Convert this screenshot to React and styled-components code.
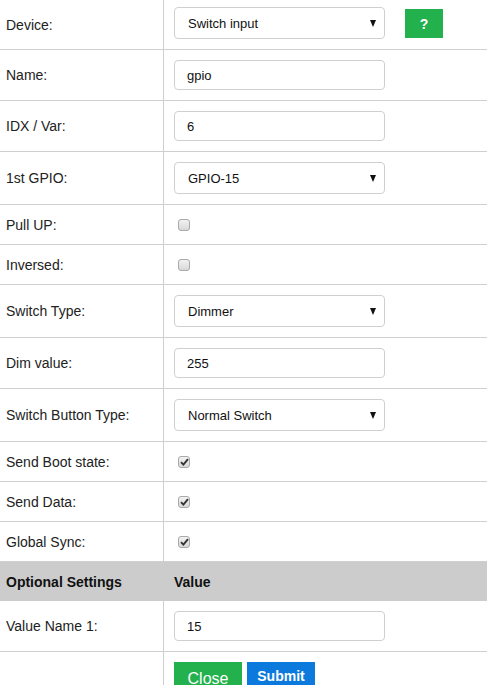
import styled, { createGlobalStyle } from "styled-components";

const GlobalStyle = createGlobalStyle`
    body {
        margin: 0;
        background: #fff;
        font-family: "Liberation Sans", Arial, sans-serif;
        color: #222;
    }
`

const rows = [
    { label: 'Device:', kind: 'select', value: 'Switch input', help: true, first: true },
    { label: 'Name:', kind: 'input', value: 'gpio' },
    { label: 'IDX / Var:', kind: 'input', value: '6' },
    { label: '1st GPIO:', kind: 'select', value: 'GPIO-15' },
    { label: 'Pull UP:', kind: 'check', value: false },
    { label: 'Inversed:', kind: 'check', value: false },
    { label: 'Switch Type:', kind: 'select', value: 'Dimmer' },
    { label: 'Dim value:', kind: 'input', value: '255' },
    { label: 'Switch Button Type:', kind: 'select', value: 'Normal Switch' },
    { label: 'Send Boot state:', kind: 'check', value: true },
    { label: 'Send Data:', kind: 'check', value: true },
    { label: 'Global Sync:', kind: 'check', value: true },
];

function CheckBox({ checked }) {
    return (
        <Box>
            {checked && (
                <svg width="9" height="8" viewBox="0 0 9 8">
                    <path d="M1 4.2 L3.4 6.6 L8 1.2" fill="none" stroke="#333" strokeWidth="1.9" />
                </svg>
            )}
        </Box>
    )
}

function Control({ kind, value }) {
    switch (kind) {
        case 'select':
            return (
                <SelectBox>
                    <span>{value}</span>
                    <Arrow />
                </SelectBox>
            );
        case 'input':
            return (<TextBox>{value}</TextBox>);
        case 'check':
            return (<CheckBox checked={value} />);
        default:
            return null;
    }
}

export default function App() {
    return (
        <>
            <GlobalStyle />
            <Table>
                {rows.map((item, index) =>
                    <Row key={index} $kind={item.kind} $first={item.first}>
                        <Label>{item.label}</Label>
                        <Cell>
                            <Control kind={item.kind} value={item.value} />
                            {item.help && <HelpButton>?</HelpButton>}
                        </Cell>
                    </Row>
                )}
                <HeaderRow>
                    <Label>Optional Settings</Label>
                    <Cell>Value</Cell>
                </HeaderRow>
                <Row $kind="input">
                    <Label>Value Name 1:</Label>
                    <Cell>
                        <TextBox>15</TextBox>
                    </Cell>
                </Row>
                <Row $kind="buttons" $last>
                    <Label></Label>
                    <Cell>
                        <CloseButton>Close</CloseButton>
                        <SubmitButton>Submit</SubmitButton>
                    </Cell>
                </Row>
            </Table>
        </>
    )
}

const heights = { select: 52, input: 50, check: 39, buttons: 40 };

const Table = styled.div`
    display: flex;
    flex-direction: column;
    width: 487px;
`
const Row = styled.div`
    display: grid;
    grid-template-columns: 164px 1fr;
    height: ${p => p.$first ? 49 : heights[p.$kind]}px;
    border-bottom: ${p => p.$last ? 'none' : '1px solid #cfcfcf'};
    font-size: 14px;

    & > div:last-child {
        padding-top: ${p => p.$first ? '7px' : p.$kind === 'buttons' ? '10px' : '0'};
        align-items: ${p => (p.$first || p.$kind === 'buttons') ? 'flex-start' : 'center'};
    }
`
const Label = styled.div`
    display: flex;
    align-items: center;
    padding-left: 6px;
    border-right: 1px solid #cfcfcf;
`
const Cell = styled.div`
    display: flex;
    align-items: center;
    padding-left: 10px;
    gap: 5px;
`
const HeaderRow = styled(Row)`
    height: 39px;
    background: #cccccc;
    border-bottom: none;
    font-weight: bold;
    color: #111;

    ${Label} {
        border-right: none;
    }
`
const SelectBox = styled.div`
    box-sizing: border-box;
    display: flex;
    align-items: center;
    justify-content: space-between;
    width: 211px;
    height: 32px;
    padding: 0 8px 0 13px;
    border: 1px solid #cfcfcf;
    border-radius: 4px;
    font-size: 13px;
    color: #111;
    background: #fff;
`
const Arrow = styled.div`
    width: 0;
    height: 0;
    border-left: 3.5px solid transparent;
    border-right: 3.5px solid transparent;
    border-top: 7px solid #111;
`
const TextBox = styled.div`
    box-sizing: border-box;
    display: flex;
    align-items: center;
    width: 211px;
    height: 30px;
    padding-left: 12px;
    border: 1px solid #cfcfcf;
    border-radius: 4px;
    font-size: 13px;
    color: #111;
`
const Box = styled.div`
    box-sizing: border-box;
    display: flex;
    align-items: center;
    justify-content: center;
    width: 12px;
    height: 12px;
    margin-left: 4px;
    border: 1px solid #a9a9a9;
    border-radius: 3px;
    background: linear-gradient(#f2f2f2, #d8d8d8);
`
const HelpButton = styled.div`
    display: flex;
    align-items: center;
    justify-content: center;
    width: 38px;
    height: 29px;
    margin-left: 15px;
    margin-top: 2px;
    background: #22b14c;
    color: #fff;
    font-weight: bold;
    font-size: 14px;
`
const CloseButton = styled.div`
    display: flex;
    align-items: center;
    justify-content: center;
    width: 68px;
    height: 30px;
    background: #22b14c;
    color: #fff;
    font-size: 16px;
    padding-top: 3px;
    box-sizing: border-box;
`
const SubmitButton = styled(CloseButton)`
    background: #0c79dc;
    font-size: 14px;
    font-weight: bold;
    padding-top: 0;
    align-items: flex-start;
    padding-top: 6px;
`
